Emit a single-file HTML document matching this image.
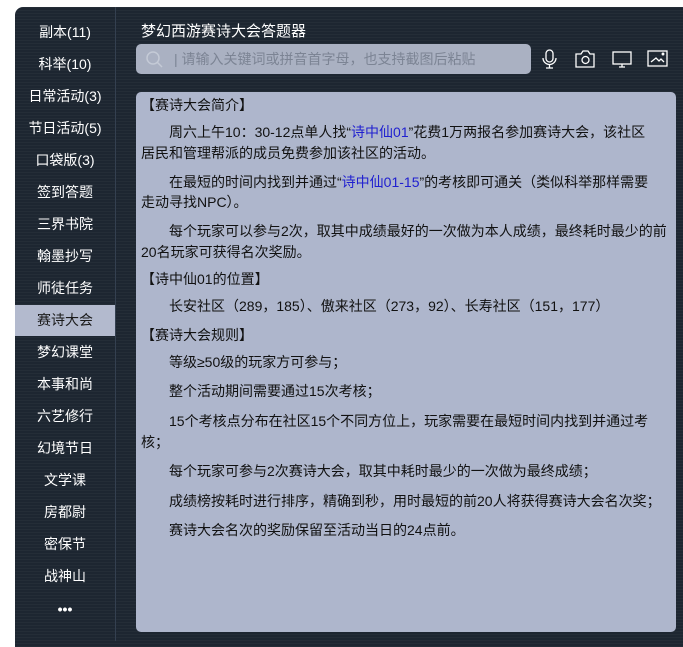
<!DOCTYPE html>
<html><head><meta charset="utf-8"><style>
body{margin:0;width:683px;height:641px;background:#fff;position:relative;overflow:hidden;font-family:"Liberation Sans","Noto Sans CJK SC",sans-serif}
.panel{position:absolute;left:15px;top:7px;width:680px;height:640px;background:#1d2631;border-radius:8px 0 0 0;
background-image:repeating-linear-gradient(0deg,rgba(255,255,255,0.03) 0 1px,transparent 1px 3px)}
.div{position:absolute;left:115px;top:7px;width:1px;height:634px;background:#344050}
.nav{position:absolute;left:15px;width:100px;text-align:center;color:#fff;font-size:14px;height:31px;line-height:31px}
.sel{background:#b3bace;color:#1a1a1a}
.title{position:absolute;left:141px;top:20px;color:#fff;font-size:15px}
.search{position:absolute;left:136px;top:44px;width:395px;height:30px;background:#aab1c2;border-radius:5px;color:#7c8494;font-size:14px;line-height:30px}
.content{position:absolute;left:136px;top:92px;width:540px;height:540px;background:#aeb6cc;border-radius:5px}
.l{position:absolute;font-size:14px;color:#111;white-space:nowrap;left:141px}
.i{left:169px}
.b{color:#2020d0}
</style></head><body>
<div class="panel"></div><div class="div"></div>
<div class="nav" style="top:17px">副本(11)</div>
<div class="nav" style="top:49px">科举(10)</div>
<div class="nav" style="top:81px">日常活动(3)</div>
<div class="nav" style="top:113px">节日活动(5)</div>
<div class="nav" style="top:145px">口袋版(3)</div>
<div class="nav" style="top:177px">签到答题</div>
<div class="nav" style="top:209px">三界书院</div>
<div class="nav" style="top:241px">翰墨抄写</div>
<div class="nav" style="top:273px">师徒任务</div>
<div class="nav sel" style="top:305px">赛诗大会</div>
<div class="nav" style="top:337px">梦幻课堂</div>
<div class="nav" style="top:369px">本事和尚</div>
<div class="nav" style="top:401px">六艺修行</div>
<div class="nav" style="top:433px">幻境节日</div>
<div class="nav" style="top:465px">文学课</div>
<div class="nav" style="top:497px">房都尉</div>
<div class="nav" style="top:529px">密保节</div>
<div class="nav" style="top:561px">战神山</div>
<div class="nav" style="top:594px;font-weight:bold">•••</div>
<div class="title">梦幻西游赛诗大会答题器</div>
<div class="search"><svg width="20" height="20" style="position:absolute;left:9px;top:6px" viewBox="0 0 20 20"><circle cx="8" cy="8" r="6" fill="none" stroke="#c4cad6" stroke-width="1.5"/><line x1="12.5" y1="12.5" x2="17" y2="17" stroke="#c4cad6" stroke-width="1.5"/></svg><span style="position:absolute;left:38px">| 请输入关键词或拼音首字母，也支持截图后粘贴</span></div>
<svg style="position:absolute;left:540px;top:48px" width="130" height="22" viewBox="0 0 130 22" fill="none" stroke="#fff" stroke-width="1.3">
<rect x="6" y="2" width="7" height="12" rx="3.5"/><path d="M3 10a6.5 6.5 0 0 0 13 0M9.5 16.5v3M6 20h7"/>
<path d="M36 6h5l2-3h5l2 3h4v13H36z"/><circle cx="45.5" cy="12" r="3.5"/>
<rect x="73" y="4" width="18" height="12"/><path d="M79 19h6M82 16v3"/>
<rect x="108" y="3" width="19" height="15"/><path d="M111 14l5-4 3 3 2-2 3 3"/><circle cx="123" cy="6" r=".8"/>
</svg>
<div class="content"></div>
<div class="l" style="top:95px">【赛诗大会简介】</div>
<div class="l i" style="top:122px">周六上午10：30-12点单人找“<span class="b">诗中仙01</span>”花费1万两报名参加赛诗大会，该社区</div>
<div class="l" style="top:143px">居民和管理帮派的成员免费参加该社区的活动。</div>
<div class="l i" style="top:172px">在最短的时间内找到并通过“<span class="b">诗中仙01-15</span>”的考核即可通关（类似科举那样需要</div>
<div class="l" style="top:192px">走动寻找NPC）。</div>
<div class="l i" style="top:221px">每个玩家可以参与2次，取其中成绩最好的一次做为本人成绩，最终耗时最少的前</div>
<div class="l" style="top:242px">20名玩家可获得名次奖励。</div>
<div class="l" style="top:269px">【诗中仙01的位置】</div>
<div class="l i" style="top:296px">长安社区（289，185）、傲来社区（273，92）、长寿社区（151，177）</div>
<div class="l" style="top:325px">【赛诗大会规则】</div>
<div class="l i" style="top:352px">等级≥50级的玩家方可参与；</div>
<div class="l i" style="top:381px">整个活动期间需要通过15次考核；</div>
<div class="l i" style="top:411px">15个考核点分布在社区15个不同方位上，玩家需要在最短时间内找到并通过考</div>
<div class="l" style="top:432px">核；</div>
<div class="l i" style="top:461px">每个玩家可参与2次赛诗大会，取其中耗时最少的一次做为最终成绩；</div>
<div class="l i" style="top:491px">成绩榜按耗时进行排序，精确到秒，用时最短的前20人将获得赛诗大会名次奖；</div>
<div class="l i" style="top:520px">赛诗大会名次的奖励保留至活动当日的24点前。</div>
</body></html>
